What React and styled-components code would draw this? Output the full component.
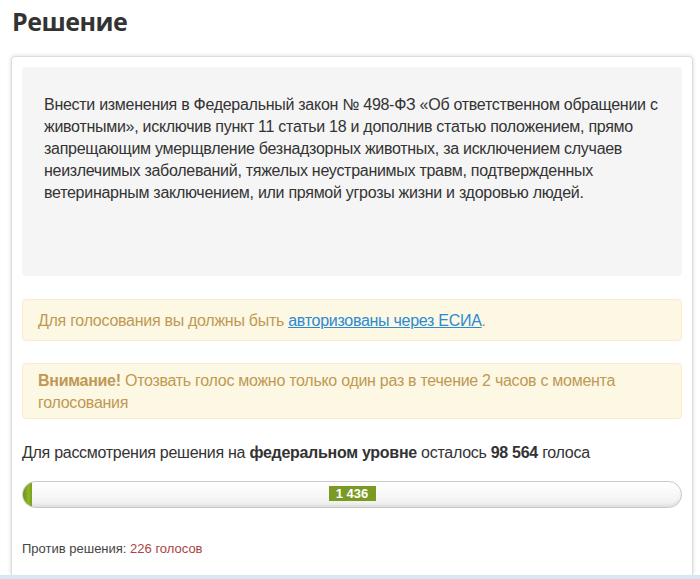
import React from 'react';
import styled, { createGlobalStyle } from 'styled-components';

const GlobalStyle = createGlobalStyle`
    body {
        margin: 0;
        background: #fff;
        font-family: "Liberation Sans", Arial, sans-serif;
        color: #333;
    }
`;

const Page = styled.div`
    width: 700px;
    height: 579px;
    overflow: hidden;
    display: flex;
    flex-direction: column;
`;

const Title = styled.h1`
    margin: 0;
    padding: 4px 0 0 12px;
    height: 56px;
    box-sizing: border-box;
    font-family: "Open Sans", sans-serif;
    font-weight: 700;
    font-size: 25px;
    letter-spacing: -0.5px;
    line-height: 34px;
    color: #333;
`;

const Card = styled.div`
    margin: 0 7px 0 11px;
    padding: 10px 10px 0;
    border: 1px solid #ddd;
    border-bottom: none;
    border-radius: 4px 4px 0 0;
    box-shadow: 0 0 4px rgba(0, 0, 0, 0.15);
    flex: 1;
`;

const Description = styled.div`
    background: #f5f5f5;
    border-radius: 4px;
    min-height: 209px;
    box-sizing: border-box;
    padding: 27px 22px;
    font-size: 16px;
    letter-spacing: -0.28px;
    line-height: 22px;
    color: #333;
`;

const Alert = styled.div`
    margin-top: ${({ $gap }) => $gap}px;
    background: #fcf8e3;
    border: 1px solid #faebcc;
    border-radius: 4px;
    padding: ${({ $pad }) => $pad};
    color: #c09853;
    font-size: 16px;
    letter-spacing: -0.28px;
    line-height: 22px;

    b {
        font-weight: 700;
    }

    a {
        color: #2a8ad4;
        text-decoration: underline;
    }
`;

const Status = styled.p`
    margin: 23px 0 0;
    font-size: 16px;
    letter-spacing: -0.28px;
    line-height: 22px;
    color: #333;
`;

const Bar = styled.div`
    position: relative;
    margin-top: 17px;
    height: 27px;
    box-sizing: border-box;
    border: 1px solid #c8c8c8;
    border-radius: 14px;
    background: linear-gradient(#ffffff 0%, #f6f6f6 60%, #ececec 100%);
    box-shadow: inset 0 -2px 3px rgba(0, 0, 0, 0.06);
    overflow: hidden;
    display: flex;
    align-items: center;
    justify-content: center;
`;

const Fill = styled.div`
    position: absolute;
    left: 0;
    top: 0;
    bottom: 0;
    border-radius: 13px 0 0 13px;
    background: linear-gradient(90deg, #6c8f17 0%, #8db52a 60%, #7aa020 100%);
`;

const BarLabel = styled.span`
    position: relative;
    margin-top: -2px;
    width: 47px;
    height: 15px;
    background: #7a9a24;
    color: #fff;
    font-weight: 700;
    font-size: 13px;
    line-height: 15px;
    text-align: center;
`;

const Against = styled.p`
    margin: 32px 0 0;
    font-size: 13px;
    line-height: 18px;
    color: #444;

    span {
        color: #a94442;
    }
`;

const BottomStrip = styled.div`
    height: 4px;
    background: #d6e9f1;
    flex-shrink: 0;
`;

const App = () => {
    const votes = 1436;
    const needed = 100000;
    return (
        <Page>
            <GlobalStyle />
            <Title>Решение</Title>
            <Card>
                <Description>
                    Внести изменения в Федеральный закон № 498-ФЗ «Об ответственном обращении с
                    животными», исключив пункт 11 статьи 18 и дополнив статью положением, прямо
                    запрещающим умерщвление безнадзорных животных, за исключением случаев
                    неизлечимых заболеваний, тяжелых неустранимых травм, подтвержденных
                    ветеринарным заключением, или прямой угрозы жизни и здоровью людей.
                </Description>
                <Alert $gap={23} $pad="10px 15px 8px">
                    Для голосования вы должны быть <a href="#">авторизованы через ЕСИА</a>.
                </Alert>
                <Alert $gap={22} $pad="6px 15px 4px">
                    <b>Внимание!</b> Отозвать голос можно только один раз в течение 2 часов с момента
                    голосования
                </Alert>
                <Status>
                    Для рассмотрения решения на <b>федеральном уровне</b> осталось <b>98 564</b> голоса
                </Status>
                <Bar>
                    <Fill style={{ width: `${Math.max(9, (votes / needed) * 660)}px` }} />
                    <BarLabel>1 436</BarLabel>
                </Bar>
                <Against>
                    Против решения: <span>226 голосов</span>
                </Against>
            </Card>
            <BottomStrip />
        </Page>
    );
};

export default App;
